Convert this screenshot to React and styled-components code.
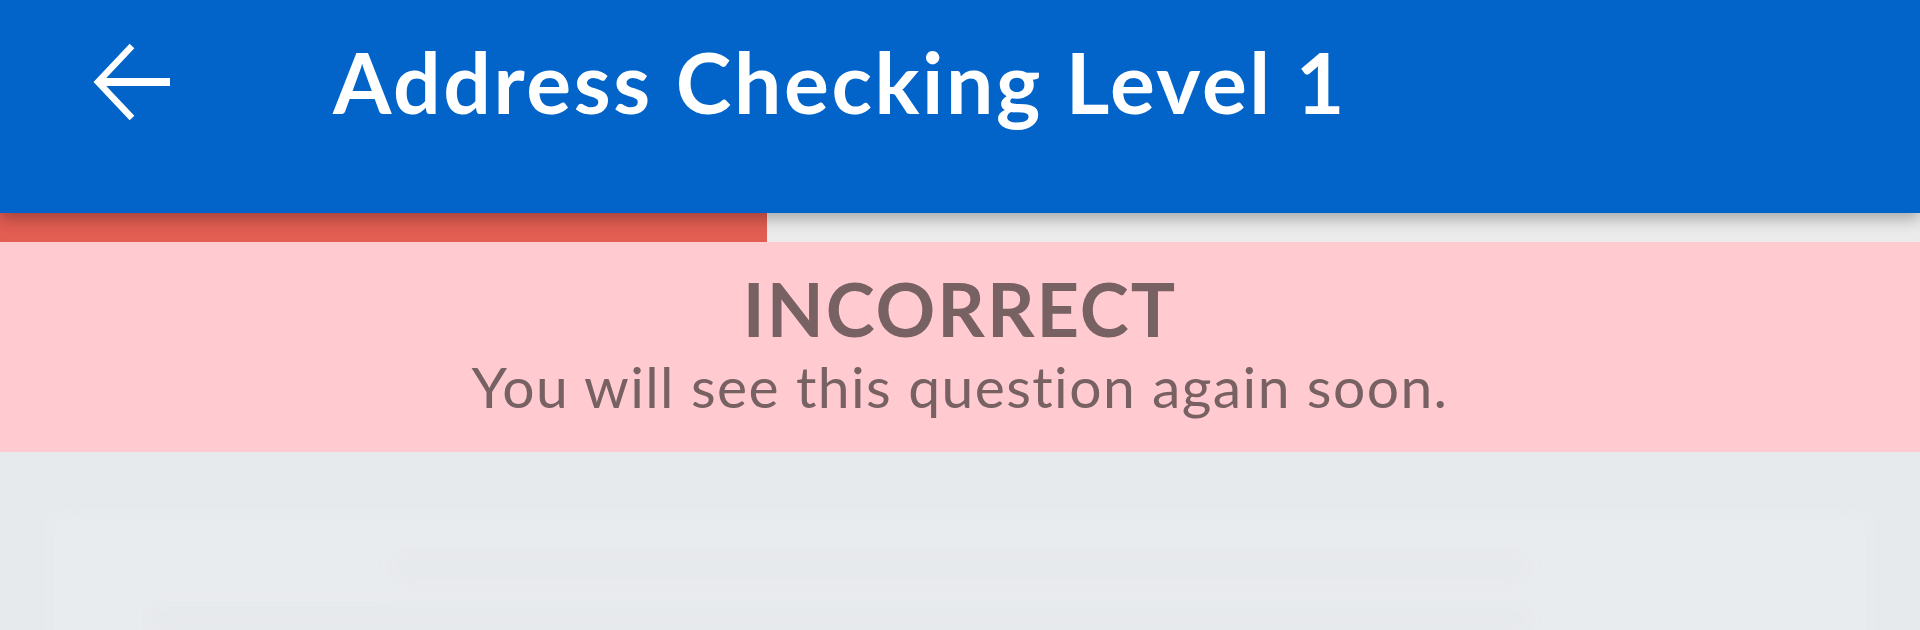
import React from 'react'
import styled, { createGlobalStyle } from 'styled-components'

const GlobalStyle = createGlobalStyle`
  html, body {
    margin: 0;
    padding: 0;
    background: #e7eaed;
    font-family: 'Lato', 'Noto Sans', sans-serif;
  }
`

const Page = styled.div`
  width: 1920px;
  height: 630px;
  display: flex;
  flex-direction: column;
  overflow: hidden;
  background: #e7eaed;
`

const Header = styled.header`
  position: relative;
  z-index: 2;
  flex-shrink: 0;
  height: 213px;
  background: #0264c8;
  box-shadow: 0 6px 14px rgba(0, 0, 0, 0.28);
  display: flex;
  align-items: flex-start;
`

const HeaderRow = styled.div`
  height: 164px;
  display: flex;
  align-items: center;
  padding-left: 88px;
`

const BackButton = styled.button`
  width: 84px;
  height: 84px;
  padding: 0;
  border: none;
  background: none;
  display: flex;
  align-items: center;
  justify-content: center;
  cursor: pointer;
`

const Title = styled.h1`
  margin: 0 0 0 161px;
  font-family: 'Lato', sans-serif;
  font-weight: 700;
  font-size: 84px;
  line-height: 1;
  color: #ffffff;
  letter-spacing: 2.6px;
`

const Track = styled.div`
  flex-shrink: 0;
  height: 29px;
  background: #ebebeb;
  display: flex;
`

const Fill = styled.div`
  background: #e25d52;
`

const Banner = styled.section`
  flex-shrink: 0;
  height: 210px;
  background: #ffcbd1;
  display: flex;
  flex-direction: column;
  align-items: center;
  padding-top: 30px;
  box-sizing: border-box;
  color: #776163;
`

const Verdict = styled.h2`
  margin: 0;
  font-family: 'Lato', sans-serif;
  font-weight: 700;
  font-size: 74px;
  line-height: 1;
  letter-spacing: 2px;
`

const Hint = styled.p`
  margin: 12px 0 0;
  font-family: 'Lato', sans-serif;
  font-weight: 400;
  font-size: 57px;
  line-height: 1;
  letter-spacing: 1.4px;
`

const Body = styled.main`
  flex: 1;
  min-height: 0;
  padding: 58px 46px 0;
`

const GhostCard = styled.div`
  height: 200px;
  border-radius: 18px;
  background: rgba(255, 255, 255, 0.1);
  box-shadow: 0 0 10px rgba(0, 0, 0, 0.015);
  filter: blur(10px);
  display: flex;
  flex-direction: column;
  gap: 26px;
  padding: 44px 100px;
`

const GhostLine = styled.div`
  height: 26px;
  width: ${p => p.$w};
  margin-left: ${p => p.$ml || '0'};
  background: rgba(210, 214, 220, 0.14);
  border-radius: 6px;
`

const progress = 767

export default function App() {
  return (
    <>
      <GlobalStyle />
      <Page>
        <Header>
          <HeaderRow>
            <BackButton aria-label="Back">
              <svg width="84" height="84" viewBox="0 0 84 84" fill="none">
                <path
                  d="M82 42H10"
                  stroke="#ffffff"
                  strokeWidth="8"
                />
                <path
                  d="M44 6L10 42l34 36"
                  stroke="#ffffff"
                  strokeWidth="6.5"
                  strokeLinejoin="miter"
                />
              </svg>
            </BackButton>
            <Title>Address Checking Level 1</Title>
          </HeaderRow>
        </Header>
        <Track>
          <Fill style={{ width: progress }} />
        </Track>
        <Banner>
          <Verdict>INCORRECT</Verdict>
          <Hint>You will see this question again soon.</Hint>
        </Banner>
        <Body>
          <GhostCard>
            <GhostLine $w="70%" $ml="15%" />
            <GhostLine $w="85%" />
            <GhostLine $w="80%" $ml="5%" />
          </GhostCard>
        </Body>
      </Page>
    </>
  )
}
